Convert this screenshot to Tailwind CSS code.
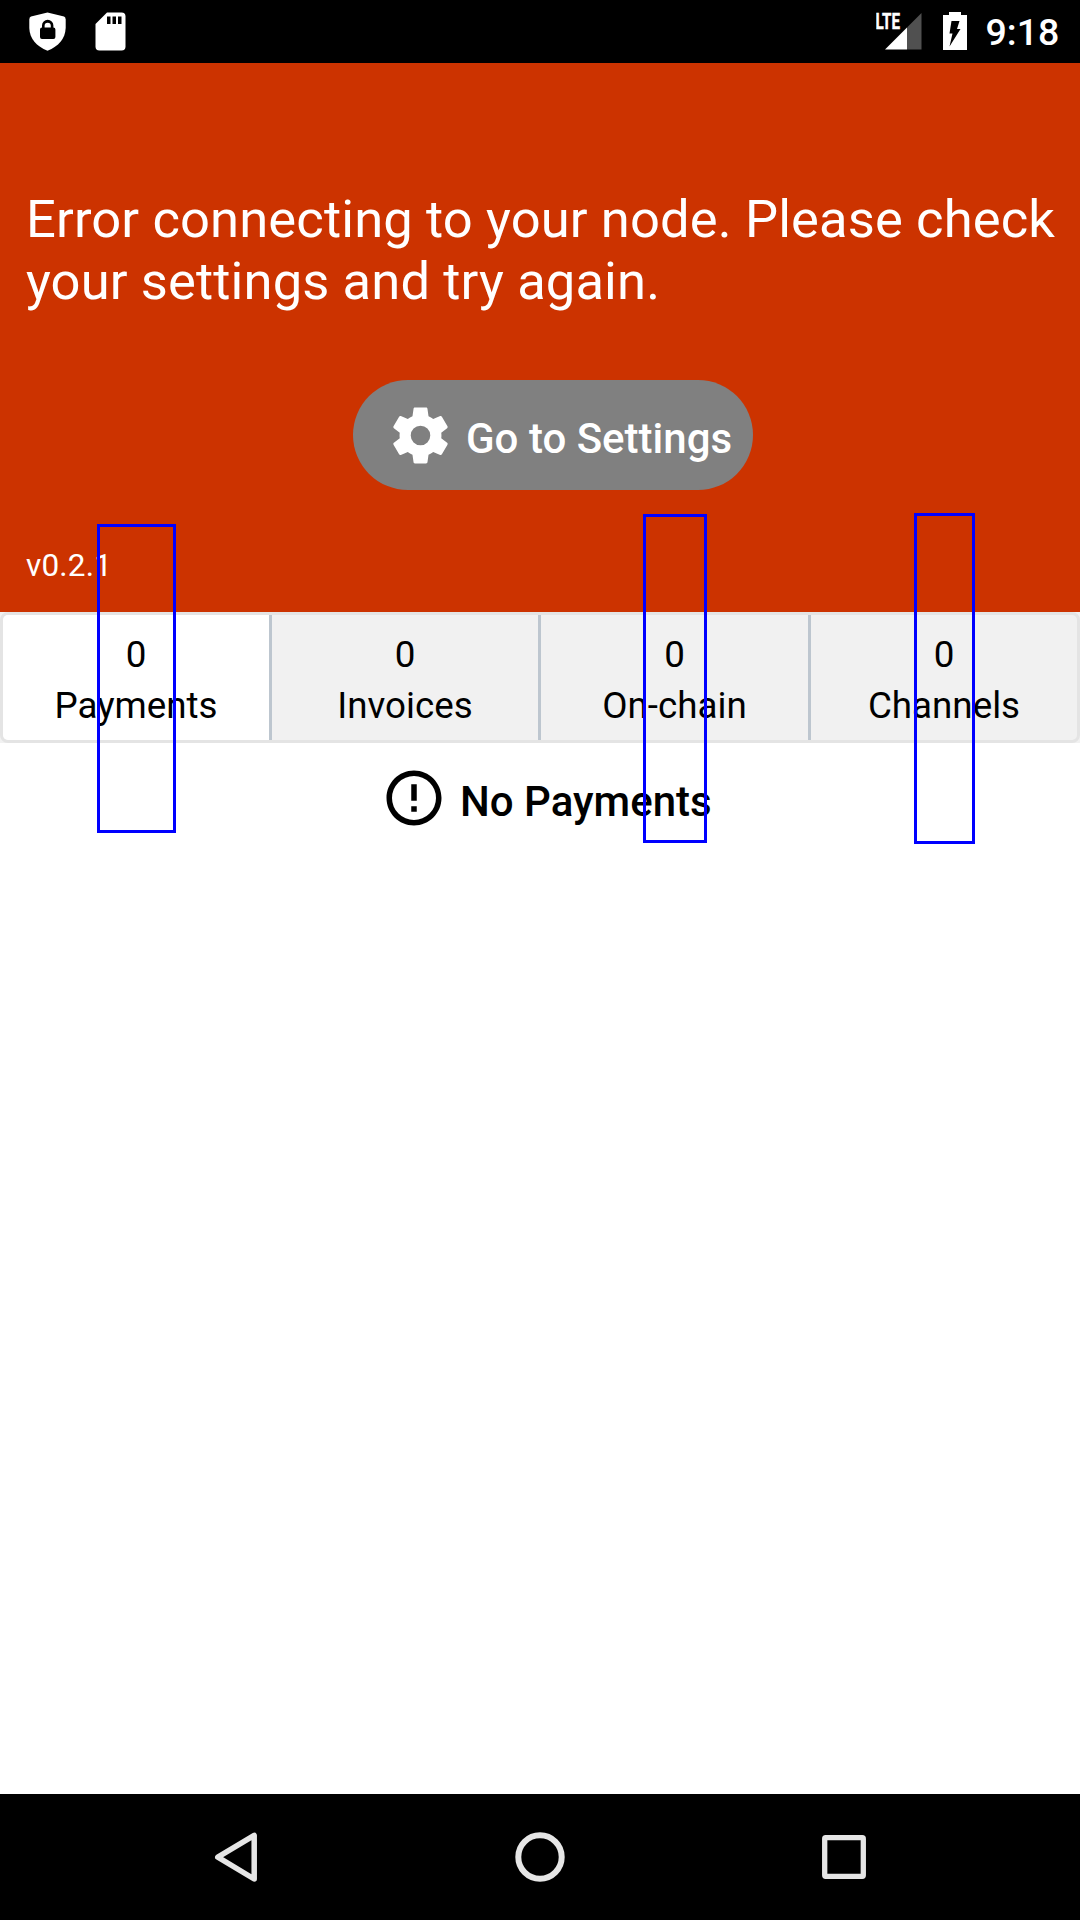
<!DOCTYPE html>
<html lang="en">
<head>
<meta charset="utf-8">
<title>Node wallet</title>
<script src="https://cdn.jsdelivr.net/npm/@tailwindcss/browser@4"></script>
</head>
<body class="bg-white font-['Roboto',sans-serif]">
<div class="relative flex h-[1920px] w-[1080px] flex-col overflow-hidden">
  <!-- Status bar -->
  <div class="flex h-[63px] shrink-0 items-start justify-between bg-black">
    <div class="flex pl-[29px]">
      <svg class="h-[63px] w-[37px]" viewBox="0 0 37 63"><path fill="#fff" d="M18.5 12.5 35 16.5Q36.6 17 36.7 19.5V28C36.3 38.5 29.5 46.5 18.5 50.7 7.5 46.5.6 38.5.3 28V19.5Q.4 17 2 16.5Z"/><path d="M11 29.5q0-2 2-2V25.500a5.700 5.700 0 0 1 11.400 0v2q2 0 2 2V37q0 2-2 2H13q-2 0-2-2ZM15.600 27.500h6.200V25.800a3.100 3.100 0 0 0-6.200 0Z" fill-rule="evenodd"/></svg>
      <svg class="ml-[29px] h-[63px] w-[32px]" viewBox="0 0 32 63"><path fill="#fff" d="M12 12.500H26.500a4 4 0 0 1 4 4V46.500a4 4 0 0 1-4 4H4.500a4 4 0 0 1-4-4V24Z"/><path d="M12 16.500h3.500v7.500H12zM17.500 16.500h3.500v7.500h-3.500zM23 16.500h3.500v7.500H23z"/></svg>
    </div>
    <div class="flex">
      <svg class="h-[63px] w-[46px]" viewBox="876 0 46 63"><path fill="#fff" d="M885 49.500 907 27.500V49.500Z"/><path fill="#505050" d="M907 27.500 921.500 13V49.500H907Z"/><text x="875.500" y="29" fill="#fff" stroke="#fff" stroke-width=".4" font-family="Roboto" font-weight="700" font-size="21.500" textLength="24.500" lengthAdjust="spacingAndGlyphs">LTE</text></svg>
      <svg class="ml-[21px] h-[63px] w-[24px]" viewBox="943 0 24 63"><path fill="#fff" d="M943 15H949V12H961V15H967V50H943Z"/><path d="M951.500 21H959.500L957 29H960.500L949.500 46.500 952.500 33.500H949.500Z"/></svg>
      <div class="w-[113px] pt-[11px] pl-[18.500px] text-[37.500px] leading-[43px] font-medium text-white">9:18</div>
    </div>
  </div>

  <!-- Error header -->
  <header class="flex h-[549px] shrink-0 flex-col bg-[#cc3300] px-[26px] pt-[125px] text-white">
    <p class="text-[52.500px] leading-[62px] tracking-[0.130px] whitespace-nowrap">Error connecting to your node. Please check<br>your settings and try again.</p>
    <button class="mt-[68px] ml-[327px] flex h-[110px] w-[400px] items-center rounded-[55px] bg-[#808080] pl-[33.500px] text-[42px] font-medium">
      <svg class="h-[67px] w-[67px]" viewBox="0 0 24 24" fill="#fff"><path d="M19.430 12.980c.04-.32.07-.64.07-.98s-.03-.66-.07-.98l2.110-1.650c.19-.15.24-.42.12-.64l-2-3.460c-.12-.22-.39-.3-.61-.22l-2.490 1c-.52-.4-1.080-.73-1.690-.98l-.38-2.650C14.460 2.180 14.250 2 14 2h-4c-.25 0-.46.18-.49.42l-.38 2.650c-.61.25-1.170.59-1.690.98l-2.490-1c-.23-.09-.49 0-.61.22l-2 3.460c-.13.22-.07.49.12.64l2.110 1.650c-.04.32-.07.65-.07.98s.03.66.07.98l-2.110 1.650c-.19.15-.24.42-.12.64l2 3.460c.12.22.39.3.61.22l2.490-1c.52.4 1.080.73 1.690.98l.38 2.650c.03.24.24.42.49.42h4c.25 0 .46-.18.49-.42l.38-2.650c.61-.25 1.170-.59 1.690-.98l2.490 1c.23.09.49 0 .61-.22l2-3.460c.12-.22.07-.49-.12-.64zM12 15.500A3.500 3.500 0 1 1 12 8.500a3.500 3.500 0 0 1 0 7z"/></svg>
      <span class="pt-[7px] pl-[12.500px] whitespace-nowrap">Go to Settings</span>
    </button>
    <span class="mt-[57px] text-[31.500px] leading-[37px] tracking-[0.200px]">v0.2.1</span>
  </header>

  <!-- Tabs -->
  <nav class="h-[131px] shrink-0 bg-[#f1f1f1]">
    <div class="flex h-full overflow-hidden rounded-[8px] border-3 border-[#e4e4e4] text-center text-[36.750px] leading-[51px]">
      <div class="w-[269px] border-r-3 border-[#bdc6cf] bg-white pt-[14px]">0<br>Payments</div>
      <div class="w-[269px] border-r-3 border-[#bdc6cf] pt-[14px]">0<br>Invoices</div>
      <div class="w-[270px] border-r-3 border-[#bdc6cf] pt-[14px]">0<br>On-chain</div>
      <div class="flex-1 pt-[14px]">0<br>Channels</div>
    </div>
  </nav>

  <!-- Empty state -->
  <main class="flex flex-1 items-start pt-[22px] pl-[381px]">
    <svg class="h-[66px] w-[66px]" viewBox="0 0 24 24"><path d="M11 15h2v2h-2zm0-8h2v6h-2zm.990-5C6.470 2 2 6.480 2 12s4.470 10 9.990 10C17.520 22 22 17.520 22 12S17.520 2 11.990 2zM12 20a8 8 0 1 1 0-16 8 8 0 0 1 0 16z"/></svg>
    <span class="pt-[12px] pl-[13px] text-[42px] leading-[49px] font-medium">No Payments</span>
  </main>

  <!-- Navigation bar -->
  <footer class="flex h-[126px] shrink-0 items-center bg-black pl-[212px]">
    <svg class="h-[60px] w-[660px]" viewBox="212 1827 660 60" fill="none" stroke="#e6e6e6" stroke-linejoin="round"><path stroke-width="5.500" d="M217.800 1857.200 254.200 1835.300V1879Z"/><circle cx="540" cy="1857" r="21.700" stroke-width="6"/><rect x="824.700" y="1837.700" width="38.600" height="38.600" rx="1" stroke-width="5.300"/></svg>
  </footer>

  <!-- Highlight frames -->
  <div class="absolute top-[524px] left-[97px] h-[309px] w-[79px] border-3 border-[#0000ff]"></div>
  <div class="absolute top-[514px] left-[643px] h-[329px] w-[64px] border-3 border-[#0000ff]"></div>
  <div class="absolute top-[513px] left-[914px] h-[331px] w-[61px] border-3 border-[#0000ff]"></div>
</div>
</body>
</html>
